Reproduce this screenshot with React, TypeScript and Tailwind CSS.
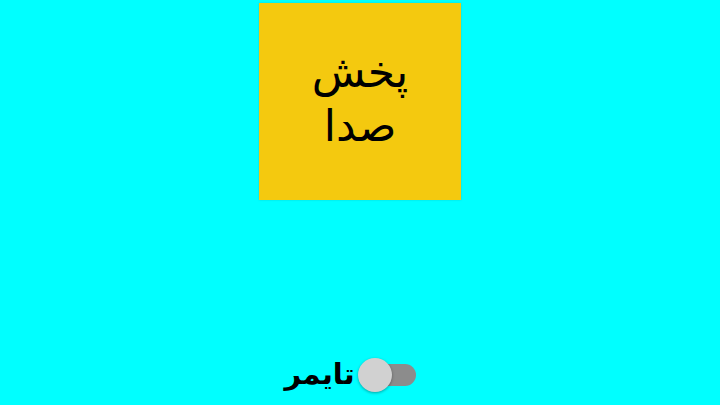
import React from "react";

export default function App() {
  return (
    <div className="w-[720px] h-[405px] bg-[#00ffff] flex flex-col items-center overflow-hidden" style={{ fontFamily: '"DejaVu Sans", sans-serif' }}>
      <div className="mt-[3px] w-[202px] h-[197px] bg-[#f4c90f] flex items-center justify-center shadow-[0_0_2px_rgba(0,0,0,0.15)]">
        <div dir="rtl" className="text-center text-[44px] leading-[54px] text-black pb-[6px]">
          پخش
          <br />
          صدا
        </div>
      </div>
      <div className="flex-1" />
      <div className="flex items-center gap-[3px] mb-[13px] ml-[-20px]">
        <span dir="rtl" className="text-[29px] font-bold text-black leading-none pb-[2px]">تایمر</span>
        <div className="relative w-[58px] h-[34px] flex items-center">
          <div className="absolute left-[4px] right-0 h-[22px] rounded-full bg-[#8c8c8c]" />
          <div className="absolute left-0 w-[34px] h-[34px] rounded-full bg-[#d1d1d1] shadow-[0_1px_3px_rgba(0,0,0,0.35)]" />
        </div>
      </div>
    </div>
  );
}
